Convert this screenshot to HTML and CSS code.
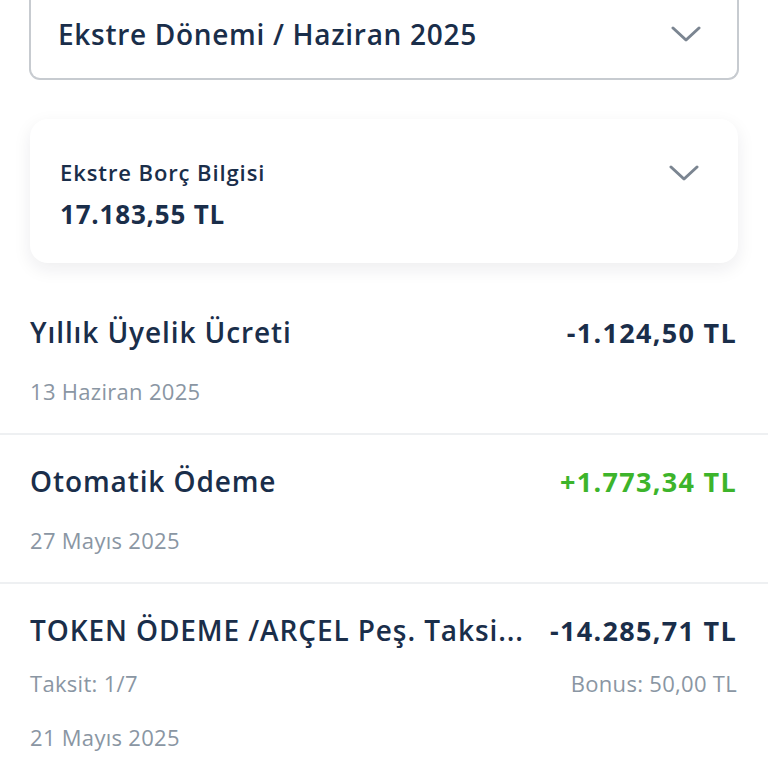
FILE: index.html
```html
<!DOCTYPE html>
<html lang="tr">
<head>
    <meta charset="UTF-8">
    <meta name="viewport" content="width=device-width, initial-scale=1.0">
    <title>Ekstre</title>
    <link rel="stylesheet" href="styles.css">
</head>
<body>
    <div class="period">
        <span class="period-label">Ekstre Dönemi / Haziran 2025</span>
        <svg class="chevron" width="30" height="16" viewBox="0 0 30 16"><path d="M2 2 L15 14 L28 2" fill="none" stroke="#7b8591" stroke-width="3" stroke-linecap="round" stroke-linejoin="round"/></svg>
    </div>

    <div class="debt-card">
        <div class="debt-info">
            <div class="debt-title">Ekstre Borç Bilgisi</div>
            <div class="debt-amount">17.183,55 TL</div>
        </div>
        <svg class="chevron small" width="30" height="18" viewBox="0 0 30 18"><path d="M2 3 L15 15 L28 3" fill="none" stroke="#7b8591" stroke-width="3" stroke-linecap="round" stroke-linejoin="round"/></svg>
    </div>

    <ul class="transactions">
        <li class="tx">
            <div class="tx-line">
                <span class="tx-name">Yıllık Üyelik Ücreti</span>
                <span class="tx-amount">-1.124,50 TL</span>
            </div>
            <div class="tx-date">13 Haziran 2025</div>
        </li>
        <li class="tx">
            <div class="tx-line">
                <span class="tx-name">Otomatik Ödeme</span>
                <span class="tx-amount plus">+1.773,34 TL</span>
            </div>
            <div class="tx-date">27 Mayıs 2025</div>
        </li>
        <li class="tx">
            <div class="tx-line">
                <span class="tx-name">TOKEN ÖDEME /ARÇEL Peş. Taksi...</span>
                <span class="tx-amount">-14.285,71 TL</span>
            </div>
            <div class="tx-sub">
                <span>Taksit: 1/7</span>
                <span>Bonus: 50,00 TL</span>
            </div>
            <div class="tx-date">21 Mayıs 2025</div>
        </li>
    </ul>
</body>
</html>
```

FILE: styles.css
```css
body {
    font-family: "Open Sans", "Noto Sans", sans-serif;
    margin: 0;
    padding: 0;
    background-color: #fff;
    color: #1a2e4a;
}
.period {
    margin: -12px 29px 0;
    height: 92px;
    border: 2px solid #c7cbd0;
    border-top: none;
    border-radius: 0 0 11px 11px;
    display: flex;
    align-items: center;
    justify-content: space-between;
    padding: 2px 36px 0 27px;
    box-sizing: border-box;
}
.period-label {
    font-size: 28px;
    font-weight: 600;
    letter-spacing: 0.7px;
}
.chevron {
    display: block;
}
.debt-card {
    margin: 39px 30px 0;
    height: 144px;
    background-color: #fff;
    border-radius: 18px;
    box-shadow: 0 6px 18px rgba(20, 30, 50, 0.08);
    display: flex;
    justify-content: space-between;
    align-items: flex-start;
    padding: 38px 39px 0 30px;
    box-sizing: border-box;
}
.debt-title {
    font-size: 22px;
    font-weight: 600;
    letter-spacing: 0.9px;
    line-height: 30px;
}
.debt-amount {
    font-size: 26px;
    font-weight: 700;
    letter-spacing: 0.8px;
    line-height: 34px;
    margin-top: 10px;
}
.chevron.small {
    margin-top: 7px;
}
.transactions {
    list-style: none;
    margin: 23px 0 0;
    padding: 0;
}
.tx {
    padding: 28px 31px 28px 30px;
    border-bottom: 2px solid #eef0f2;
}
.tx-line {
    display: flex;
    justify-content: space-between;
    align-items: center;
    gap: 26px;
    height: 36px;
}
.tx-name {
    font-size: 28px;
    font-weight: 600;
    letter-spacing: 0.9px;
    white-space: nowrap;
}
.tx-amount {
    font-size: 27px;
    font-weight: 700;
    letter-spacing: 1.3px;
    white-space: nowrap;
}
.tx-amount.plus {
    color: #3db42b;
}
.tx-date, .tx-sub {
    font-size: 22px;
    letter-spacing: 0.3px;
    color: #8a96a3;
    line-height: 28px;
    margin-top: 27px;
}
.tx-sub {
    display: flex;
    justify-content: space-between;
    margin-top: 21px;
}
.tx-sub + .tx-date {
    margin-top: 26px;
}
```
